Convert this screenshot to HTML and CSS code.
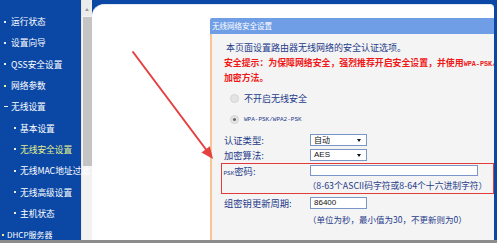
FILE: index.html
```
<!DOCTYPE html>
<html lang="zh-CN">
<head>
<meta charset="utf-8">
<title>无线网络安全设置</title>
<link rel="stylesheet" href="styles.css">
</head>
<body>
<div class="screen">
  <div class="frame">
    <nav class="sidebar">
      <ul class="menu">
        <li class="item"><span class="dot"></span>运行状态</li>
        <li class="item"><span class="dot"></span>设置向导</li>
        <li class="item"><span class="dot"></span>QSS安全设置</li>
        <li class="item"><span class="dot dot-yellow"></span>网络参数</li>
        <li class="item"><span class="dash"></span>无线设置</li>
        <li class="item sub"><span class="dot"></span>基本设置</li>
        <li class="item sub active"><span class="dot"></span>无线安全设置</li>
        <li class="item sub"><span class="dot"></span>无线MAC地址过滤</li>
        <li class="item sub"><span class="dot"></span>无线高级设置</li>
        <li class="item sub"><span class="dot"></span>主机状态</li>
        <li class="item outdent"><span class="dot dot-yellow"></span>DHCP服务器</li>
      </ul>
    </nav>
    <div class="scrollbar">
      <div class="sb-btn"><span class="sb-arrow"></span></div>
      <div class="sb-thumb"></div>
    </div>
    <main class="main">
      <div class="content">
        <section class="panel">
          <div class="panel-head">无线网络安全设置</div>
          <div class="panel-body">
            <p class="intro">本页面设置路由器无线网络的安全认证选项。</p>
            <p class="warn">安全提示：为保障网络安全，强烈推荐开启安全设置，并使用<span class="mono-b">WPA-PSK/WPA2-PSK AES</span><br>加密方法。</p>
            <div class="radio-row first"><span class="radio"></span><span>不开启无线安全</span></div>
            <div class="radio-row"><span class="radio checked"></span><span class="mono">WPA-PSK/WPA2-PSK</span></div>
            <div class="field f-auth"><span class="label">认证类型:</span><span class="select">自动<i class="caret"></i></span></div>
            <div class="field f-enc"><span class="label">加密算法:</span><span class="select latin">AES<i class="caret"></i></span></div>
            <div class="highlight">
              <div class="field f-psk"><span class="label"><span class="mono">PSK</span>密码:</span><span class="input wide"></span></div>
              <div class="hint">（8-63个ASCII码字符或8-64个十六进制字符）</div>
            </div>
            <div class="field f-group"><span class="label">组密钥更新周期:</span><span class="input latin">86400</span></div>
            <div class="hint">（单位为秒，最小值为30，不更新则为0）</div>
          </div>
        </section>
      </div>
    </main>
  </div>
  <div class="bottomline"></div>
  <svg class="arrow" width="497" height="243" viewBox="0 0 497 243">
    <line x1="133" y1="52" x2="206" y2="149.5" stroke="#e5403f" stroke-width="2" stroke-linecap="round"/>
    <polygon points="213,159 201.5,152.5 209.8,146.2" fill="#e5403f"/>
  </svg>
</div>
</body>
</html>
```
FILE: styles.css
```
* { box-sizing: border-box; }
html, body { margin: 0; padding: 0; }
body {
  width: 497px;
  height: 243px;
  overflow: hidden;
  background: #ffffff;
  font-family: "Noto Sans CJK SC", "Noto Sans", sans-serif;
}
.screen {
  position: relative;
  width: 497px;
  height: 243px;
  display: flex;
  flex-direction: column;
}
.frame {
  display: flex;
  height: 240px;
  overflow: hidden;
}
.bottomline {
  height: 3px;
  background: #8c8c8c;
}

/* sidebar */
.sidebar {
  position: relative;
  z-index: 2;
  width: 81px;
  flex: none;
  background: #0b48a6;
}
.menu {
  list-style: none;
  margin: 0;
  padding: 11px 0 0 0;
}
.item {
  height: 21.3px;
  display: flex;
  align-items: center;
  padding-left: 4px;
  color: #ffffff;
  font-size: 8.7px;
  white-space: nowrap;
}
.item.sub { padding-left: 14px; }
.item.outdent { padding-left: 2px; font-size: 8px; }
.item.active { color: #e4f08a; }
.dot {
  width: 2px;
  height: 2px;
  background: #e8f0ff;
  margin-right: 5px;
  flex: none;
}
.sub .dot { margin-right: 4px; }
.dot-yellow { background: #e8f090; }
.outdent .dot { margin-right: 3px; }
.dash {
  width: 4px;
  height: 1px;
  background: #e8f0ff;
  margin-right: 3px;
  flex: none;
}

/* scrollbar */
.scrollbar {
  width: 11px;
  flex: none;
  background: #f2f2f2;
  display: flex;
  flex-direction: column;
  border-left: 1px solid #e6e6e6;
}
.sb-btn {
  height: 16px;
  background: #ececec;
  display: flex;
  justify-content: center;
  padding-top: 8px;
}
.sb-arrow {
  width: 0;
  height: 0;
  border-left: 2.5px solid transparent;
  border-right: 2.5px solid transparent;
  border-bottom: 3px solid #9a9a9a;
}
.sb-thumb {
  height: 149px;
  margin: 1px 0 0 1px;
  background: #c4c4c4;
}

/* main */
.main {
  flex: 1;
  background: #0b48a6;
  padding-top: 4px;
  padding-right: 3px;
  overflow: hidden;
}
.content {
  height: 236px;
  background: #ffffff;
  border-top-left-radius: 12px;
  border-top-right-radius: 4px;
  padding: 13px 0 0 118px;
  overflow: hidden;
  border-top: 1px solid #dfe8f6;
}
.panel {
  width: 420px;
}
.panel-head {
  height: 16px;
  background: #709ee6;
  color: #ffffff;
  font-size: 7.5px;
  line-height: 16px;
  padding-left: 2px;
  border-top-left-radius: 2px;
  white-space: nowrap;
}
.panel-body {
  background: #f4f4f4;
  border-left: 2px solid #f7c596;
  padding: 7px 0 30px 12px;
  color: #1e3b8a;
  font-size: 9px;
  height: 220px;
}
.intro, .warn {
  margin: 0;
  line-height: 14.5px;
  white-space: nowrap;
}
.intro { padding-left: 2px; }
.warn {
  color: #f01818;
  font-weight: bold;
  font-size: 8.9px;
}
.mono-b {
  font-family: "Liberation Mono", "DejaVu Sans Mono", monospace;
  font-size: 6.8px;
}
.radio-row {
  height: 21px;
  display: flex;
  align-items: center;
  padding-left: 6px;
  white-space: nowrap;
}
.radio-row.first { margin-top: 2.5px; }
.radio {
  width: 9px;
  height: 9px;
  border-radius: 50%;
  background: #e4e4e4;
  border: 1px solid #d4d4d4;
  margin-right: 5px;
  display: flex;
  align-items: center;
  justify-content: center;
  flex: none;
}
.radio.checked::after {
  content: "";
  width: 3px;
  height: 3px;
  border-radius: 50%;
  background: #666666;
}
.mono {
  font-family: "Liberation Mono", "DejaVu Sans Mono", monospace;
  font-size: 6px;
  letter-spacing: 0;
}
.field {
  display: flex;
  align-items: center;
  height: 12px;
  white-space: nowrap;
}
.f-auth { margin-top: 4px; }
.f-enc { margin-top: 3px; }
.f-group { margin-top: 3px; }
.label {
  width: 86px;
  flex: none;
  font-size: 9.3px;
}
.select, .input {
  width: 57px;
  height: 12px;
  border: 1px solid #7a96c8;
  background: #ffffff;
  color: #111111;
  font-size: 8px;
  line-height: 10px;
  padding-left: 3px;
  position: relative;
  flex: none;
}
.latin { font-family: "Liberation Sans", Arial, sans-serif; font-size: 8px; }
.caret {
  position: absolute;
  right: 5px;
  top: 3.5px;
  width: 0;
  height: 0;
  border-left: 2px solid transparent;
  border-right: 2px solid transparent;
  border-top: 3px solid #111111;
}
.input.wide { width: 168px; height: 11px; }
.highlight {
  margin: 2px 0 0 -3px;
  width: 273px;
  height: 31px;
  border: 1.5px solid #e33a3a;
  padding: 0.5px 0 0 1.5px;
}
.hint {
  margin-left: 84px;
  height: 12px;
  line-height: 12px;
  margin-top: 3px;
  white-space: nowrap;
  font-size: 8.8px;
}
.f-group + .hint { margin-top: 4px; font-size: 8.5px; }

.arrow {
  position: absolute;
  left: 0;
  top: 0;
  z-index: 5;
  pointer-events: none;
}
```
